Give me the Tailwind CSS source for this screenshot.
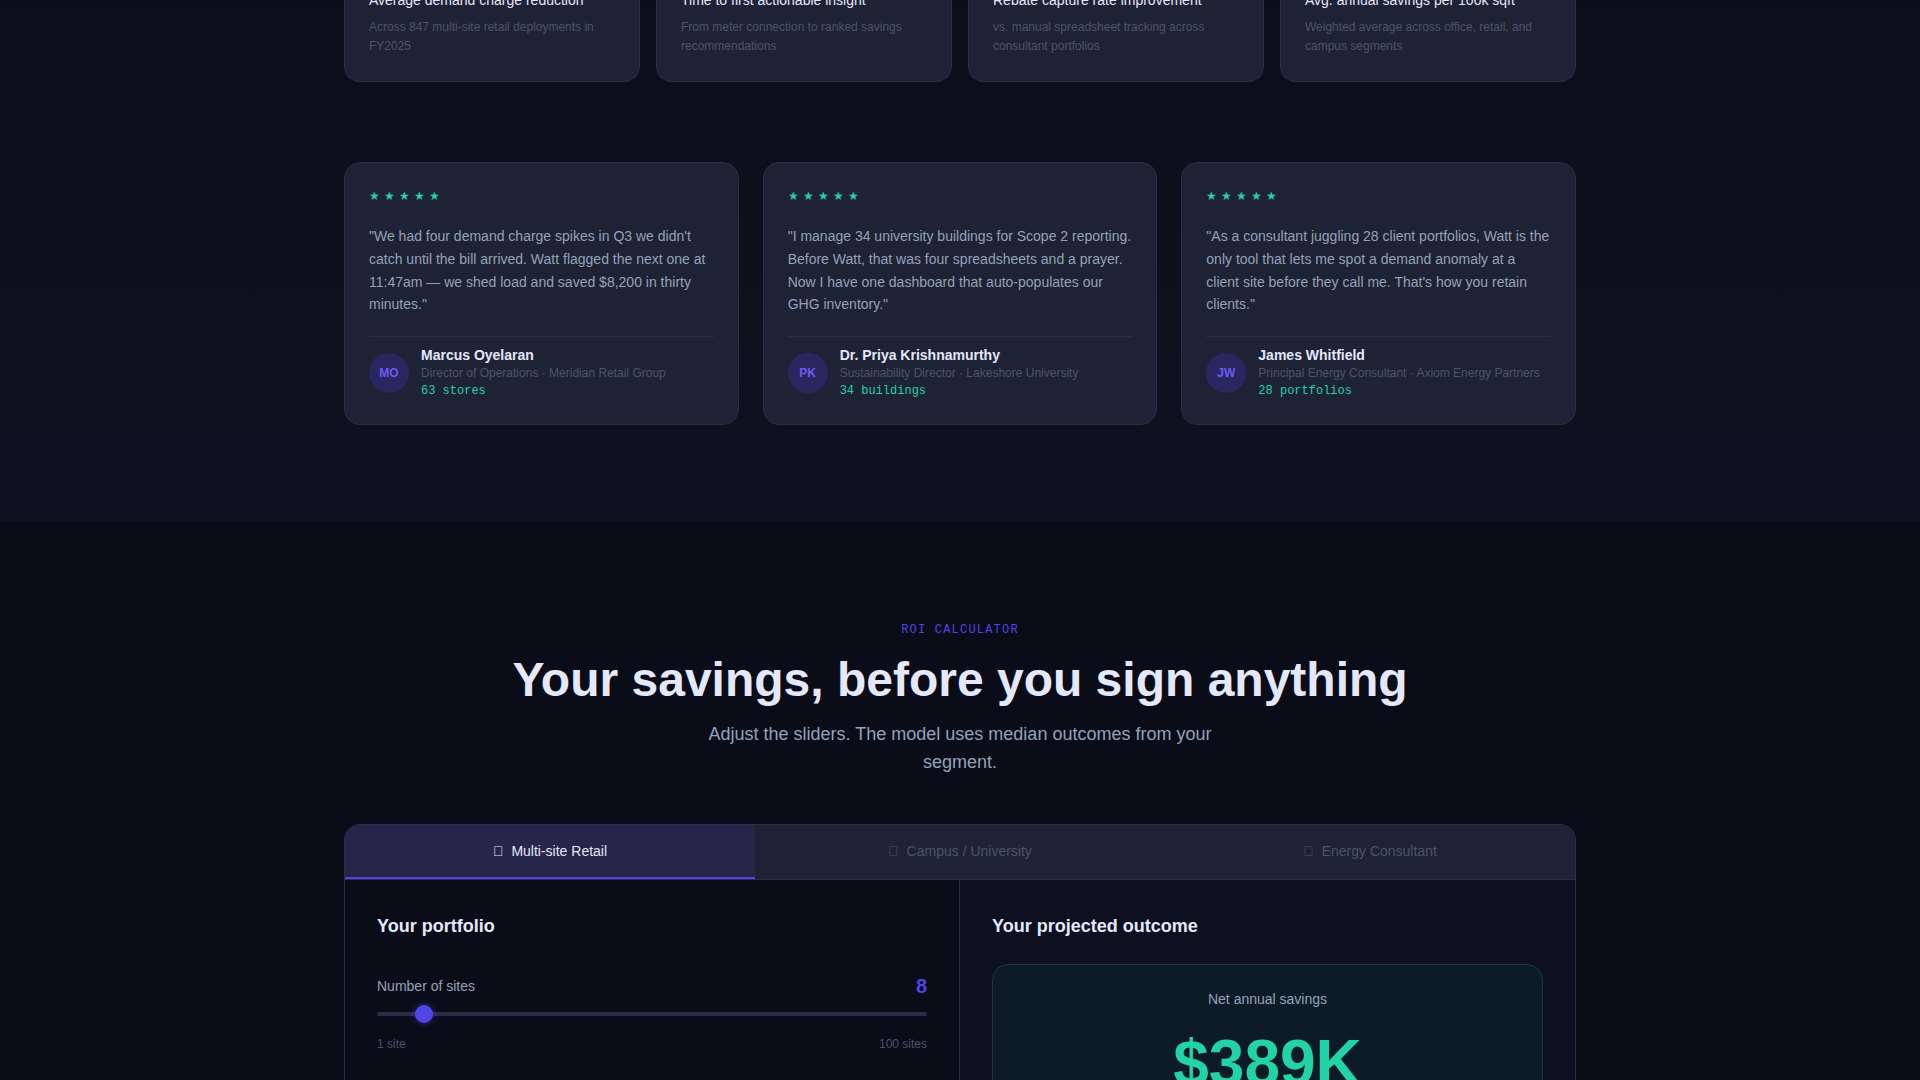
<!DOCTYPE html>
<html lang="en">

<head>
    <meta charset="UTF-8">
    <meta name="viewport" content="width=device-width, initial-scale=1.0">
    <script src="https://cdn.jsdelivr.net/npm/@tailwindcss/browser@4"></script>
    <title>Watt - Energy savings</title>
</head>

<body class="bg-[#0a0c18] text-[#e4e8fb] font-['Liberation_Sans',Arial,sans-serif] overflow-x-hidden">
    <!-- Results -->
    <section class="bg-linear-to-b from-[#0b0f1b] to-[#0e111f] pb-24 overflow-hidden">
        <div class="max-w-7xl mx-auto px-6 -mt-4">
            <div class="grid grid-cols-4 gap-4 mb-20">
                <div class="bg-[#1e2235] border border-t-0 border-[#2a2d45] rounded-b-2xl px-6 pb-[25px] pt-1.5">
                    <h3 class="text-sm leading-5 font-medium mb-2">Average demand charge reduction</h3>
                    <p class="text-xs leading-[19px] text-[#4a5568]">Across 847 multi-site retail deployments in FY2025</p>
                </div>
                <div class="bg-[#1e2235] border border-t-0 border-[#2a2d45] rounded-b-2xl px-6 pb-[25px] pt-1.5">
                    <h3 class="text-sm leading-5 font-medium mb-2">Time to first actionable insight</h3>
                    <p class="text-xs leading-[19px] text-[#4a5568]">From meter connection to ranked savings recommendations</p>
                </div>
                <div class="bg-[#1e2235] border border-t-0 border-[#2a2d45] rounded-b-2xl px-6 pb-[25px] pt-1.5">
                    <h3 class="text-sm leading-5 font-medium mb-2">Rebate capture rate improvement</h3>
                    <p class="text-xs leading-[19px] text-[#4a5568]">vs. manual spreadsheet tracking across consultant portfolios</p>
                </div>
                <div class="bg-[#1e2235] border border-t-0 border-[#2a2d45] rounded-b-2xl px-6 pb-[25px] pt-1.5">
                    <h3 class="text-sm leading-5 font-medium mb-2">Avg. annual savings per 100k sqft</h3>
                    <p class="text-xs leading-[19px] text-[#4a5568]">Weighted average across office, retail, and campus segments</p>
                </div>
            </div>

            <!-- Testimonials -->
            <div class="grid grid-cols-3 gap-6">
                <figure class="bg-[#1e2235] border border-[#2a2d45] rounded-2xl p-6">
                    <div class="flex gap-1 text-xs leading-[18px] text-[#22d3a5] mb-5">
                        <span>★</span><span>★</span><span>★</span><span>★</span><span>★</span>
                    </div>
                    <blockquote class="text-sm leading-relaxed text-[#94a3b8] mb-5">"We had four demand charge spikes in Q3 we didn't catch until the bill arrived. Watt flagged the next one at 11:47am — we shed load and saved $8,200 in thirty minutes."</blockquote>
                    <figcaption class="flex items-center gap-3 border-t border-[#2a2d45] pt-2">
                        <div class="size-10 shrink-0 rounded-full bg-[#292760] text-[#6a5df2] text-xs font-bold flex items-center justify-center">MO</div>
                        <div>
                            <p class="text-sm leading-5 font-semibold">Marcus Oyelaran</p>
                            <p class="text-xs leading-[17px] text-[#4a5568]">Director of Operations · Meridian Retail Group</p>
                            <p class="text-xs leading-[18px] text-[#22d3a5] font-['Liberation_Mono',monospace]">63 stores</p>
                        </div>
                    </figcaption>
                </figure>
                <figure class="bg-[#1e2235] border border-[#2a2d45] rounded-2xl p-6">
                    <div class="flex gap-1 text-xs leading-[18px] text-[#22d3a5] mb-5">
                        <span>★</span><span>★</span><span>★</span><span>★</span><span>★</span>
                    </div>
                    <blockquote class="text-sm leading-relaxed text-[#94a3b8] mb-5">"I manage 34 university buildings for Scope 2 reporting. Before Watt, that was four spreadsheets and a prayer. Now I have one dashboard that auto-populates our GHG inventory."</blockquote>
                    <figcaption class="flex items-center gap-3 border-t border-[#2a2d45] pt-2">
                        <div class="size-10 shrink-0 rounded-full bg-[#292760] text-[#6a5df2] text-xs font-bold flex items-center justify-center">PK</div>
                        <div>
                            <p class="text-sm leading-5 font-semibold">Dr. Priya Krishnamurthy</p>
                            <p class="text-xs leading-[17px] text-[#4a5568]">Sustainability Director · Lakeshore University</p>
                            <p class="text-xs leading-[18px] text-[#22d3a5] font-['Liberation_Mono',monospace]">34 buildings</p>
                        </div>
                    </figcaption>
                </figure>
                <figure class="bg-[#1e2235] border border-[#2a2d45] rounded-2xl p-6">
                    <div class="flex gap-1 text-xs leading-[18px] text-[#22d3a5] mb-5">
                        <span>★</span><span>★</span><span>★</span><span>★</span><span>★</span>
                    </div>
                    <blockquote class="text-sm leading-relaxed text-[#94a3b8] mb-5">"As a consultant juggling 28 client portfolios, Watt is the only tool that lets me spot a demand anomaly at a client site before they call me. That's how you retain clients."</blockquote>
                    <figcaption class="flex items-center gap-3 border-t border-[#2a2d45] pt-2">
                        <div class="size-10 shrink-0 rounded-full bg-[#292760] text-[#6a5df2] text-xs font-bold flex items-center justify-center">JW</div>
                        <div>
                            <p class="text-sm leading-5 font-semibold">James Whitfield</p>
                            <p class="text-xs leading-[17px] text-[#4a5568]">Principal Energy Consultant · Axiom Energy Partners</p>
                            <p class="text-xs leading-[18px] text-[#22d3a5] font-['Liberation_Mono',monospace]">28 portfolios</p>
                        </div>
                    </figcaption>
                </figure>
            </div>
        </div>
    </section>

    <!-- ROI calculator -->
    <section class="pt-25">
        <div class="max-w-7xl mx-auto px-6">
            <div class="text-center mb-12">
                <p class="text-xs leading-[18px] tracking-widest text-[#4f46e5] font-['Liberation_Mono',monospace] mb-3.5">ROI CALCULATOR</p>
                <h2 class="text-5xl leading-[53px] font-bold mb-3.5">Your savings, before you sign anything</h2>
                <p class="text-lg leading-7 text-[#94a3b8] max-w-xl mx-auto">Adjust the sliders. The model uses median outcomes from your segment.</p>
            </div>

            <div class="border border-b-0 border-[#2a2d45] rounded-t-2xl overflow-hidden">
                <div class="grid grid-cols-3 bg-[#1e2235] border-b border-[#2a2d45] text-sm font-medium" role="tablist">
                    <button type="button" role="tab" aria-selected="true" class="h-[54px] flex items-center justify-center gap-2 bg-[#25264a] border-b-2 border-[#4f46e5]"><span>&#xe001;</span>Multi-site Retail</button>
                    <button type="button" role="tab" class="h-[54px] flex items-center justify-center gap-2 border-b-2 border-transparent text-[#4a5568]"><span>&#xe001;</span>Campus / University</button>
                    <button type="button" role="tab" class="h-[54px] flex items-center justify-center gap-2 border-b-2 border-transparent text-[#4a5568]"><span>&#xe001;</span>Energy Consultant</button>
                </div>
                <div class="grid grid-cols-2">
                    <div class="p-8 border-r border-[#2a2d45]">
                        <h3 class="text-lg leading-7 font-semibold mb-8">Your portfolio</h3>
                        <div class="flex items-center justify-between mb-2">
                            <label for="sites" class="text-sm text-[#94a3b8]">Number of sites</label>
                            <output for="sites" class="text-xl leading-7 font-bold text-[#4f46e5]">8</output>
                        </div>
                        <input type="range" id="sites" min="1" max="100" value="8" class="block w-full h-1 mt-3 mb-5 appearance-none rounded-full bg-[#2a2d45] [&::-webkit-slider-thumb]:appearance-none [&::-webkit-slider-thumb]:size-[18px] [&::-webkit-slider-thumb]:rounded-full [&::-webkit-slider-thumb]:bg-[#4f46e5] [&::-webkit-slider-thumb]:shadow-[0_0_8px_#4f46e580]">
                        <div class="flex justify-between text-xs text-[#4a5568]">
                            <span>1 site</span>
                            <span>100 sites</span>
                        </div>
                    </div>
                    <div class="p-8 bg-[#0d101f]">
                        <h3 class="text-lg leading-7 font-semibold mb-6">Your projected outcome</h3>
                        <div class="bg-[#0d1b28] border border-[#123b41] rounded-2xl p-6 text-center">
                            <p class="text-sm text-[#94a3b8] mb-[22px]">Net annual savings</p>
                            <p class="text-[64px] leading-[64px] font-bold text-[#22d3a5]">$389K</p>
                        </div>
                    </div>
                </div>
            </div>
        </div>
    </section>
    <script>
        const sites = document.getElementById("sites");
        sites.addEventListener("input", () => {
            document.querySelector("output[for=sites]").value = sites.value;
        });
    </script>
</body>

</html>
